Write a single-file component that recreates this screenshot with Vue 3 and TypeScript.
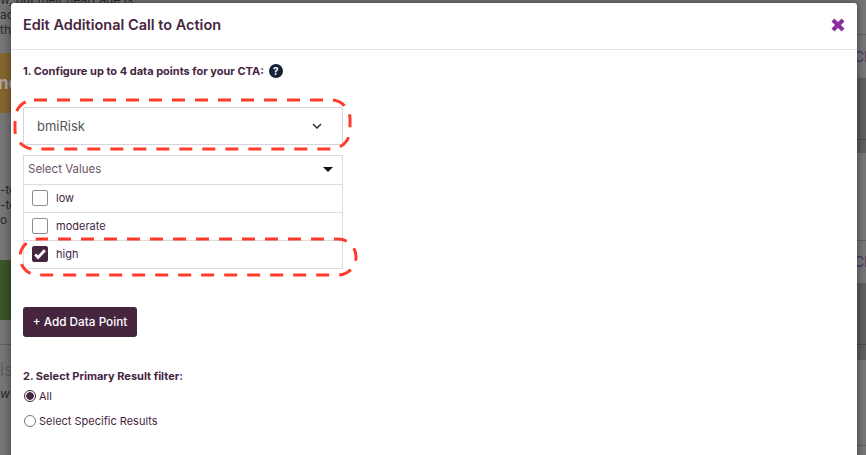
<template>
  <div class="screen">
    <!-- page behind the overlay -->
    <div class="page">
      <div class="strip left">
        <div class="bg-text top-text">
          <p>w, but their heart age is</p>
          <p>act</p>
          <p>the</p>
        </div>
        <div class="block orange">nc</div>
        <div class="bg-text mid-text">
          <p>-te</p>
          <p>-te</p>
          <p>o r</p>
        </div>
        <div class="block green"></div>
        <div class="rule left-rule"></div>
        <div class="bg-title">is</div>
        <div class="bg-text low-text"><p>w s</p></div>
      </div>
      <div class="strip right">
        <div class="rule r1"></div>
        <div class="ch c1">Ch</div>
        <div class="dark d1"><div class="rule r3"></div></div>
        <div class="rule r2"></div>
        <div class="ch c2">Ch</div>
        <div class="dark d2"><div class="rule r3"></div></div>
        <div class="rule r4"></div>
      </div>
    </div>

    <div class="modal">
      <header class="modal-head">
        <h1>Edit Additional Call to Action</h1>
        <svg class="close" viewBox="0 0 14 14" aria-label="Close">
          <path d="M2.6 2.6l8.8 8.8M11.4 2.6l-8.8 8.8" />
        </svg>
      </header>

      <div class="modal-body">
        <div class="step-label first">
          1. Configure up to 4 data points for your CTA:
          <span class="help">?</span>
        </div>

        <div class="field-wrap">
          <div class="select-box">
            <span>bmiRisk</span>
            <svg class="chevron" viewBox="0 0 10 6"><path d="M1 1l4 4 4-4" /></svg>
          </div>
          <svg class="oval oval-a" width="341" height="55" viewBox="0 0 341 55">
            <rect x="2" y="2" width="335" height="49" rx="19" />
          </svg>
        </div>

        <div class="values">
          <div class="values-head">
            <span>Select Values</span>
            <i class="caret"></i>
          </div>
          <label v-for="o in options" :key="o.name" class="value-row">
            <span class="check" :class="{ on: o.checked }">
              <svg v-if="o.checked" viewBox="0 0 14 14"><path d="M2.2 7.5l2.9 3 6.7-7.3" /></svg>
            </span>
            <span class="value-name">{{ o.name }}</span>
          </label>
          <svg class="oval oval-b" width="342" height="42" viewBox="0 0 342 42">
            <rect x="2" y="2" width="336" height="36" rx="18" />
          </svg>
        </div>

        <button class="add-btn">+ Add Data Point</button>

        <div class="step-label second">2. Select Primary Result filter:</div>
        <div class="radio-row">
          <span class="radio on"></span>All
        </div>
        <div class="radio-row">
          <span class="radio"></span>Select Specific Results
        </div>
      </div>
    </div>
  </div>
</template>

<script setup lang="ts">
interface ValueOption {
  name: string;
  checked: boolean;
}

const options: ValueOption[] = [
  { name: "low", checked: false },
  { name: "moderate", checked: false },
  { name: "high", checked: true },
];
</script>

<style scoped>
.screen {
  position: relative;
  width: 866px;
  height: 455px;
  overflow: hidden;
  background: #767676;
  font-family: Inter, "Open Sans", sans-serif;
}

.page {
  display: flex;
  justify-content: space-between;
  height: 100%;
  color: #2a2a2a;
  font-size: 12px;
}

.strip {
  width: 11px;
  overflow: hidden;
}

.strip.left {
  overflow: visible;
}

.strip.right {
  width: 9px;
}

.bg-text p {
  margin: 0;
  line-height: 15px;
  white-space: nowrap;
}

.top-text {
  height: 61px;
  margin-top: -8px;
}

.block {
  height: 60px;
  font-size: 17px;
  font-weight: 700;
  line-height: 60px;
  color: #a8a8a8;
  white-space: nowrap;
}

.orange {
  text-indent: -2px;
  background: #85652f;
}

.green {
  background: #3b5527;
}

.mid-text {
  box-sizing: border-box;
  height: 147px;
  padding-top: 69px;
}

.rule {
  height: 1px;
  background: #5f5f5f;
}

.left-rule {
  margin-top: 24px;
}

.bg-title {
  margin-top: 15px;
  font-size: 17px;
  line-height: 20px;
  color: #5e5e5e;
}

.low-text {
  margin-top: 6px;
  font-style: italic;
}

.ch {
  color: #4d2f5f;
  font-size: 14px;
  line-height: 16px;
  margin-left: -3px;
  white-space: nowrap;
}

.r1 {
  margin-top: 34px;
}

.c1 {
  margin-top: 14px;
}

.r2 {
  margin-top: 87px;
}

.c2 {
  margin-top: 13px;
}

.dark {
  display: flow-root;
  margin-top: 13px;
  background: #5f5f5f;
}

.d1 {
  height: 75px;
}

.d2 {
  height: 77px;
}

.r3 {
  margin-top: 61px;
  background: #4a4a4a;
}

.r4 {
  margin-top: 85px;
}

.modal {
  position: absolute;
  top: 3px;
  left: 11px;
  width: 846px;
  height: 470px;
  background: #fff;
  border-radius: 3px 3px 0 0;
  box-shadow: 0 0 9px rgba(0, 0, 0, 0.5);
  color: #46253f;
}

.modal-head {
  display: flex;
  align-items: center;
  justify-content: space-between;
  box-sizing: border-box;
  height: 47px;
  padding: 0 11px 3px 12px;
  border-bottom: 1px solid #e4e4e4;
}

h1 {
  margin: 0;
  font-size: 14.5px;
  font-weight: 600;
  color: #46253f;
}

.close {
  width: 16px;
  height: 16px;
  fill: none;
  stroke: #8a2ea0;
  stroke-width: 3.6;
}

.modal-body {
  padding: 0 12px;
}

.step-label {
  font-size: 11px;
  font-weight: 700;
  line-height: 16px;
}

.step-label.first {
  display: flex;
  align-items: center;
  gap: 5px;
  margin-top: 13px;
}

.help {
  display: flex;
  align-items: center;
  justify-content: center;
  width: 14px;
  height: 14px;
  border-radius: 50%;
  background: #152238;
  color: #fff;
  font-size: 10px;
}

.field-wrap {
  position: relative;
  width: 320px;
  margin-top: 28px;
}

.select-box {
  display: flex;
  align-items: center;
  justify-content: space-between;
  box-sizing: border-box;
  height: 38px;
  padding: 0 20px 0 13px;
  border: 1px solid #d3d3dc;
  border-radius: 2px;
  font-size: 13px;
  color: #555;
}

.chevron {
  width: 10px;
  height: 6px;
  fill: none;
  stroke: #333;
  stroke-width: 1.5;
}

.oval {
  position: absolute;
  pointer-events: none;
  fill: none;
  stroke: #ff3b2c;
  stroke-width: 3;
  stroke-dasharray: 13 10;
}

.oval-a {
  top: -9px;
  left: -10px;
}

.oval-b {
  top: 81px;
  left: -6px;
  stroke-dashoffset: 3;
}

.values {
  position: relative;
  box-sizing: border-box;
  width: 320px;
  margin-top: 10px;
  border: 1px solid #dcdcdc;
}

.values-head {
  display: flex;
  align-items: center;
  justify-content: space-between;
  box-sizing: border-box;
  height: 28px;
  padding: 0 9px 2px 4px;
  font-size: 11.5px;
  color: #6d5468;
}

.caret {
  width: 0;
  height: 0;
  border-left: 5px solid transparent;
  border-right: 5px solid transparent;
  border-top: 5px solid #111;
}

.value-row {
  display: flex;
  align-items: center;
  gap: 8px;
  box-sizing: border-box;
  height: 28px;
  padding: 0 0 1px 8px;
  border-top: 1px solid #dcdcdc;
  font-size: 11px;
}

.value-name {
  margin-top: -1px;
}

.check {
  box-sizing: border-box;
  display: block;
  width: 16px;
  height: 16px;
  border: 1px solid #8c8c8c;
  border-radius: 2px;
}

.check.on {
  background: #46253f;
  border-color: #46253f;
}

.check svg {
  display: block;
  width: 14px;
  height: 14px;
  fill: none;
  stroke: #fff;
  stroke-width: 2.8;
}

.add-btn {
  display: block;
  width: 114px;
  height: 30px;
  margin-top: 38px;
  padding: 0 0 1px;
  border: none;
  border-radius: 3px;
  background: #46253f;
  color: #fff;
  font-family: inherit;
  font-size: 11.75px;
  font-weight: 500;
}

.step-label.second {
  margin-top: 31px;
}

.radio-row {
  display: flex;
  align-items: center;
  gap: 3px;
  height: 25px;
  margin-top: -1px;
  font-size: 11px;
}

.radio-row + .radio-row {
  margin-top: 0;
}

.radio {
  box-sizing: border-box;
  width: 12px;
  height: 12px;
  border: 1px solid #777;
  border-radius: 50%;
  margin-left: 1px;
}

.radio.on {
  border-color: #46253f;
  background: radial-gradient(circle, #46253f 0 3.5px, #fff 4px);
}
</style>
